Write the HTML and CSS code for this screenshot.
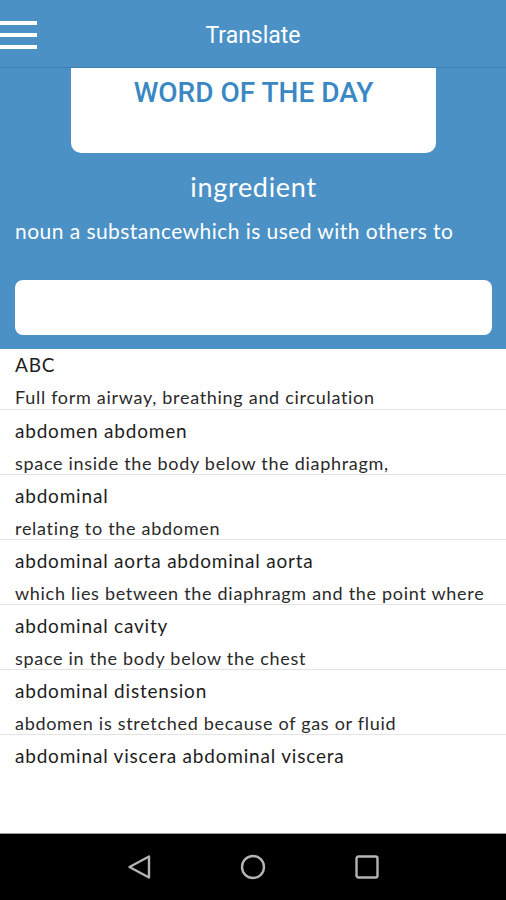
FILE: index.html
```html
<!DOCTYPE html>
<html lang="en">
<head>
  <meta charset="UTF-8">
  <meta name="viewport" content="width=device-width, initial-scale=1.0">
  <title>Translate</title>
  <link rel="stylesheet" href="styles.css">
</head>
<body>
  <div class="screen">
    <header class="appbar">
      <span class="appbar__menu">
        <i></i><i></i><i></i>
      </span>
      <h1 class="appbar__title">Translate</h1>
    </header>

    <!-- ============= word of the day ============= -->
    <section class="hero">
      <div class="wotd">
        <p class="wotd__label">WORD OF THE DAY</p>
      </div>
      <p class="hero__word">ingredient</p>
      <p class="hero__def">noun a substancewhich is used with others to</p>
      <div class="search"></div>
    </section>

    <!-- ============= list ============= -->
    <ul class="entries">
      <li class="entry">
        <p class="entry__term">ABC</p>
        <p class="entry__desc">Full form airway, breathing and circulation</p>
      </li>
      <li class="entry">
        <p class="entry__term">abdomen abdomen</p>
        <p class="entry__desc">space inside the body below the diaphragm,</p>
      </li>
      <li class="entry">
        <p class="entry__term">abdominal</p>
        <p class="entry__desc">relating to the abdomen</p>
      </li>
      <li class="entry">
        <p class="entry__term">abdominal aorta abdominal aorta</p>
        <p class="entry__desc">which lies between the diaphragm and the point where</p>
      </li>
      <li class="entry">
        <p class="entry__term">abdominal cavity</p>
        <p class="entry__desc">space in the body below the chest</p>
      </li>
      <li class="entry">
        <p class="entry__term">abdominal distension</p>
        <p class="entry__desc">abdomen is stretched because of gas or fluid</p>
      </li>
      <li class="entry entry--last">
        <p class="entry__term">abdominal viscera abdominal viscera</p>
      </li>
    </ul>

    <!-- ============= nav bar ============= -->
    <nav class="navbar">
      <svg class="navbar__icon" viewBox="0 0 26 26" width="26" height="26">
        <path d="M23 2.5 L3.5 13 L23 23.5 Z" fill="none" stroke="#b4b4b4" stroke-width="2.4" stroke-linejoin="round"/>
      </svg>
      <svg class="navbar__icon" viewBox="0 0 26 26" width="26" height="26">
        <circle cx="13" cy="13" r="11" fill="none" stroke="#b4b4b4" stroke-width="2.4"/>
      </svg>
      <svg class="navbar__icon" viewBox="0 0 26 26" width="26" height="26">
        <rect x="2.5" y="2.5" width="21" height="21" rx="2" fill="none" stroke="#b4b4b4" stroke-width="2.4"/>
      </svg>
    </nav>
  </div>
</body>
</html>
```

FILE: styles.css
```css
* {
  margin: 0;
  padding: 0;
  box-sizing: border-box;
}

body {
  background: #fff;
  font-family: Lato, "Open Sans", sans-serif;
}

.screen {
  display: flex;
  flex-direction: column;
  width: 506px;
  height: 900px;
  overflow: hidden;
}

/* ============= app bar ============= */
.appbar {
  display: flex;
  align-items: center;
  justify-content: center;
  position: relative;
  height: 68px;
  padding-top: 4px;
  background: #4b91c6;
  border-bottom: 1px solid #3f7fb0;
  flex-shrink: 0;
}

.appbar__menu {
  position: absolute;
  left: 0;
  top: 21px;
  display: flex;
  flex-direction: column;
  gap: 8px;
}

.appbar__menu i {
  display: block;
  width: 37px;
  height: 4px;
  background: #fff;
}

.appbar__title {
  font-family: Roboto, sans-serif;
  font-weight: 400;
  font-size: 23px;
  color: #fff;
}

/* ============= hero ============= */
.hero {
  background: #4b91c6;
  padding: 0 14px 14px 15px;
  flex-shrink: 0;
}

.wotd {
  height: 85px;
  margin: 0 56px;
  background: #fff;
  border-radius: 0 0 10px 10px;
  padding-top: 10px;
  text-align: center;
}

.wotd__label {
  font-family: Roboto, sans-serif;
  font-weight: 500;
  font-size: 28px;
  line-height: 30px;
  color: #3a88c3;
}

.hero__word {
  margin-top: 18px;
  text-align: center;
  font-size: 27px;
  letter-spacing: 0.7px;
  line-height: 32px;
  color: #fff;
}

.hero__def {
  margin-top: 14px;
  font-size: 21px;
  letter-spacing: 0.45px;
  line-height: 28px;
  color: #fff;
}

.search {
  margin-top: 35px;
  height: 55px;
  background: #fff;
  border-radius: 8px;
}

/* ============= list ============= */
.entries {
  list-style: none;
  flex: 1;
}

.entry {
  padding: 8px 15px 0;
  height: 65px;
  border-bottom: 1px solid #e4e4e4;
  color: #1e1e1e;
}

.entry:first-child {
  padding-top: 3px;
  height: 61px;
}

.entry--last {
  border-bottom: none;
}

.entry__term {
  font-size: 19px;
  letter-spacing: 0.8px;
  line-height: 26px;
  white-space: nowrap;
}

.entry__desc {
  margin-top: 8px;
  font-size: 18px;
  letter-spacing: 0.7px;
  line-height: 22px;
  color: #2a2a2a;
  white-space: nowrap;
}

/* ============= nav bar ============= */
.navbar {
  display: flex;
  justify-content: center;
  align-items: center;
  gap: 88px;
  height: 67px;
  background: #000;
  border-top: 1px solid #9a9a9a;
  flex-shrink: 0;
}
```
